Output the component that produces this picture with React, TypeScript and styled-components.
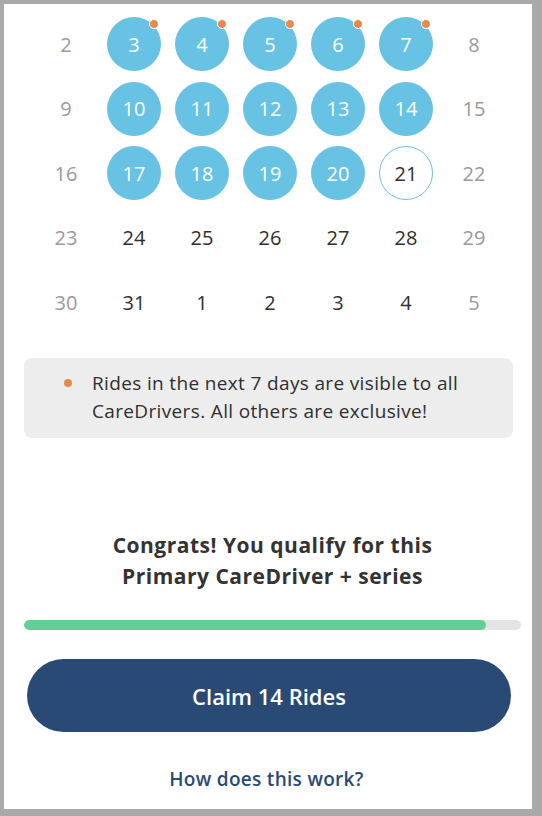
import React from 'react';
import styled, { createGlobalStyle } from 'styled-components';

const GlobalStyle = createGlobalStyle`
  html, body {
    margin: 0;
    padding: 0;
    background: #a9a9a9;
  }
  body {
    font-family: 'Open Sans', 'Noto Sans', sans-serif;
  }
`;

const Frame = styled.div`
  padding: 4px 10px 7px 4px;
`;

const Panel = styled.div`
  background: #ffffff;
  height: 805px;
  box-sizing: border-box;
  padding: 13px 19px 0 16px;
  display: flex;
  flex-direction: column;
`;

const CalendarGrid = styled.div`
  display: grid;
  grid-template-columns: repeat(7, 68px);
  grid-auto-rows: 54px;
  row-gap: 10.6px;
  margin-left: 12px;
`;

const DayCell = styled.div`
  display: flex;
  align-items: center;
  justify-content: center;
`;

type Variant = 'booked' | 'today' | 'plain' | 'muted';

const DayCircle = styled.div<{ $variant: Variant }>`
  position: relative;
  width: 54px;
  height: 54px;
  border-radius: 50%;
  box-sizing: border-box;
  display: flex;
  align-items: center;
  justify-content: center;
  font-size: 20px;
  background: ${(p) => (p.$variant === 'booked' ? '#68c2e3' : 'transparent')};
  border: ${(p) => (p.$variant === 'today' ? '1.2px solid #68c2e3' : 'none')};
  color: ${(p) =>
    p.$variant === 'booked' ? '#ffffff' : p.$variant === 'muted' ? '#9a9a9a' : '#2f2f2f'};
`;

const NewDot = styled.span`
  position: absolute;
  top: 2px;
  right: 2px;
  width: 8px;
  height: 8px;
  border-radius: 50%;
  background: #e58a4d;
  border: 1.5px solid #ffffff;
`;

const Note = styled.div`
  margin-top: 29px;
  background: #ededed;
  border-radius: 8px;
  height: 80px;
  box-sizing: border-box;
  padding: 11px 8px 0 40px;
  display: flex;
  align-items: flex-start;
  gap: 20px;
  width: 489px;
  margin-left: 4px;
`;

const NoteDot = styled.span`
  flex: none;
  width: 8px;
  height: 8px;
  border-radius: 50%;
  background: #e58a4d;
  margin-top: 10px;
`;

const NoteText = styled.p`
  margin: 0;
  font-size: 19px;
  letter-spacing: 0.35px;
  line-height: 28px;
  color: #2f2f2f;
`;

const Congrats = styled.h2`
  margin: 92px 0 0;
  padding-left: 12px;
  text-align: center;
  font-size: 21px;
  letter-spacing: 0.5px;
  line-height: 31px;
  font-weight: 700;
  color: #333333;
`;

const Track = styled.div`
  margin: 28px 0 0 4px;
  height: 10px;
  width: 497px;
  border-radius: 5px;
  background: #e4e4e4;
  overflow: hidden;
`;

const Fill = styled.div`
  height: 100%;
  border-radius: 5px;
  background: #62cf95;
`;

const ClaimButton = styled.button`
  margin: 29px 0 0 7px;
  width: 484px;
  height: 73px;
  border: none;
  border-radius: 37px;
  background: #2a4a76;
  color: #ffffff;
  font-family: 'Open Sans', sans-serif;
  font-size: 22px;
  font-weight: 600;
  cursor: pointer;
`;

const HowLink = styled.a`
  margin-top: 34px;
  align-self: center;
  font-size: 19px;
  letter-spacing: 0.3px;
  font-weight: 600;
  color: #2a4a76;
  text-decoration: none;
  cursor: pointer;
`;

type Day = { n: number; v: Variant; dot?: boolean };

const buildDays = (): Day[] => {
  const days: Day[] = [];
  days.push({ n: 2, v: 'muted' });
  [3, 4, 5, 6, 7].forEach((n) => days.push({ n, v: 'booked', dot: true }));
  days.push({ n: 8, v: 'muted' });
  days.push({ n: 9, v: 'muted' });
  [10, 11, 12, 13, 14].forEach((n) => days.push({ n, v: 'booked' }));
  days.push({ n: 15, v: 'muted' });
  days.push({ n: 16, v: 'muted' });
  [17, 18, 19, 20].forEach((n) => days.push({ n, v: 'booked' }));
  days.push({ n: 21, v: 'today' });
  days.push({ n: 22, v: 'muted' });
  days.push({ n: 23, v: 'muted' });
  [24, 25, 26, 27, 28].forEach((n) => days.push({ n, v: 'plain' }));
  days.push({ n: 29, v: 'muted' });
  days.push({ n: 30, v: 'muted' });
  [31, 1, 2, 3, 4].forEach((n) => days.push({ n, v: 'plain' }));
  days.push({ n: 5, v: 'muted' });
  return days;
};

const App = () => {
  const days = buildDays();
  const progress = 93;

  return (
    <Frame>
      <GlobalStyle />
      <Panel>
        <CalendarGrid>
          {days.map((d, i) => (
            <DayCell key={i}>
              <DayCircle $variant={d.v}>
                {d.n}
                {d.dot && <NewDot />}
              </DayCircle>
            </DayCell>
          ))}
        </CalendarGrid>

        <Note>
          <NoteDot />
          <NoteText>
            Rides in the next 7 days are visible to all CareDrivers. All others are exclusive!
          </NoteText>
        </Note>

        <Congrats>
          Congrats! You qualify for this
          <br />
          Primary CareDriver + series
        </Congrats>

        <Track>
          <Fill style={{ width: `${progress}%` }} />
        </Track>

        <ClaimButton>Claim 14 Rides</ClaimButton>

        <HowLink>How does this work?</HowLink>
      </Panel>
    </Frame>
  );
};

export default App;
